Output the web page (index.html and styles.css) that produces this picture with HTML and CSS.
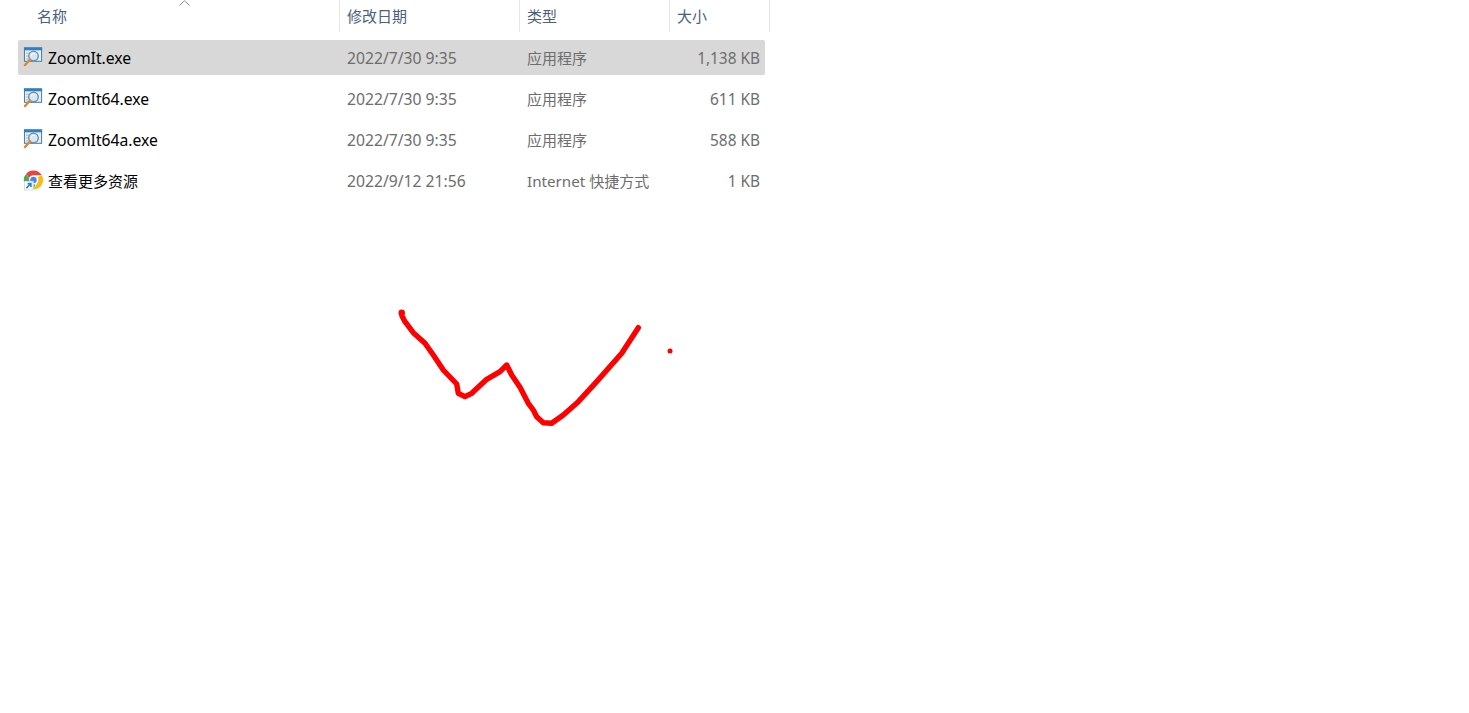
FILE: index.html
```html
<!DOCTYPE html>
<html lang="zh-CN">
<head>
  <meta charset="UTF-8" />
  <title>ZoomIt</title>
  <link rel="stylesheet" href="styles.css">
</head>
<body>
  <!-- icon sprites -->
  <svg class="sprites" width="0" height="0">
    <symbol id="zoomit" viewBox="1 0 22 22">
      <rect x="2.500" y="1.500" width="18" height="14" fill="#e6eff6" stroke="#3f76a8"/>
      <rect x="2" y="1" width="19" height="3" fill="#2f7fc4"/>
      <path d="M4 7h5M4 10h3M4 13h3" stroke="#a9b4bd"/>
      <circle cx="12" cy="10" r="5" fill="#d5e9f5" stroke="#76909f" stroke-width="1.500"/>
      <path d="M9.500 9.500a3 3 0 0 1 4-2" fill="none" stroke="#fff"/>
      <path d="M8.500 13.500L3 19.500" stroke="#d98a3d" stroke-width="2.400" stroke-linecap="round"/>
    </symbol>
    <symbol id="chrome" viewBox="0 0 22 22">
      <path d="M11 1a10 10 0 0 1 8.700 5H11a5 5 0 0 0-4.700 3.200L3.400 4.400A10 10 0 0 1 11 1z" fill="#e8453c"/>
      <path d="M19.700 6A10 10 0 0 1 11 21l4.200-7.400A5 5 0 0 0 15.300 8z" fill="#f9bc15"/>
      <path d="M3.400 4.400l4 7A5 5 0 0 0 13 15.700L11 21A10 10 0 0 1 3.400 4.400z" fill="#4aa856"/>
      <circle cx="11" cy="11" r="4" fill="#4285f4" stroke="#fff" stroke-width="1"/>
      <rect x="1" y="12" width="10" height="10" fill="#fff"/>
      <rect x="1.500" y="12.500" width="9" height="9" fill="#fff" stroke="#c4c4c4" stroke-width=".6"/>
      <path d="M3.500 19.500L8 15M4.800 14.800H8.300V18.300" fill="none" stroke="#2b7cd3" stroke-width="1.600"/>
    </symbol>
  </svg>

  <div class="explorer">
    <div class="list-header">
      <div class="col-head col-name">名称<svg class="sort-arrow" width="11" height="6" viewBox="0 0 11 6"><path d="M.5 5.500L5.500 .8l5 4.700" fill="none" stroke="#8a8a8a"/></svg></div>
      <div class="col-head col-date">修改日期</div>
      <div class="col-head col-type">类型</div>
      <div class="col-head col-size">大小</div>
    </div>

    <div class="file-list">
      <div class="file-row selected">
        <div class="file-name"><svg class="file-icon"><use href="#zoomit"/></svg>ZoomIt.exe</div>
        <div class="file-date">2022/7/30 9:35</div>
        <div class="file-type cjk">应用程序</div>
        <div class="file-size">1,138 KB</div>
      </div>
      <div class="file-row">
        <div class="file-name"><svg class="file-icon"><use href="#zoomit"/></svg>ZoomIt64.exe</div>
        <div class="file-date">2022/7/30 9:35</div>
        <div class="file-type cjk">应用程序</div>
        <div class="file-size">611 KB</div>
      </div>
      <div class="file-row">
        <div class="file-name"><svg class="file-icon"><use href="#zoomit"/></svg>ZoomIt64a.exe</div>
        <div class="file-date">2022/7/30 9:35</div>
        <div class="file-type cjk">应用程序</div>
        <div class="file-size">588 KB</div>
      </div>
      <div class="file-row">
        <div class="file-name cjk"><svg class="file-icon shortcut"><use href="#chrome"/></svg>查看更多资源</div>
        <div class="file-date">2022/9/12 21:56</div>
        <div class="file-type link-type">Internet <span class="cjk">快捷方式</span></div>
        <div class="file-size">1 KB</div>
      </div>
    </div>
  </div>

  <!-- pen annotation on top of the screen -->
  <svg class="ink" width="1469" height="713" viewBox="0 0 1469 713">
    <path d="M401.700 312.700L402 316L405 321.700L413.300 332.700L425 343.300L433.300 355L443.300 370L456.700 384L458.300 393.300L465 396.700L471.700 393.300L486.700 379.300L500 371.700L506.700 365L511.700 375L520 387.300L528.300 403.300L533.300 410L536.700 416.700L543.300 422.700L551.700 423.300L563.300 415L578.300 401.700L596.700 381.700L621.700 353.300L638.300 327.700" fill="none" stroke="#fe0000" stroke-width="5.400" stroke-linecap="round" stroke-linejoin="round"/>
    <circle cx="401.700" cy="312.700" r="3.200" fill="#fe0000"/>
    <circle cx="670" cy="351" r="2.500" fill="#fe0000"/>
  </svg>
</body>
</html>
```

FILE: styles.css
```css
html, body {
  margin: 0;
  padding: 0;
  height: 100%;
  overflow: hidden;
  background: #fff;
  font-family: "Noto Sans", "Noto Sans CJK SC", sans-serif;
  font-size: 15.7px;
}

.cjk {
  font-size: 15px;
}

.sprites {
  display: block;
}

.explorer {
  width: 770px;
}

.list-header {
  display: grid;
  grid-template-columns: 322px 180px 150px 100px;
  height: 32px;
  margin-left: 18px;
  margin-bottom: 8px;
  color: #4c607a;
}

.col-head {
  display: flex;
  align-items: center;
  padding-left: 7px;
  padding-bottom: 2px;
  border-right: 1px solid #e5e5e5;
  font-size: 15px;
}

.col-name {
  padding-left: 19px;
  position: relative;
}

.sort-arrow {
  position: absolute;
  left: 161px;
  top: 0;
}

.file-list {
  display: flex;
  flex-direction: column;
  gap: 6px;
  margin-left: 18px;
  width: 747px;
}

.file-row {
  display: grid;
  grid-template-columns: 322px 180px 150px 95px;
  align-items: center;
  height: 35px;
  border-radius: 2px;
  color: #6d6d6d;
}

.file-row.selected {
  background: #d8d8d8;
}

.file-name {
  display: flex;
  align-items: center;
  gap: 4px;
  padding-left: 5px;
  color: #000;
}

.file-icon {
  width: 21px;
  height: 22px;
  margin-top: -2px;
}

.file-icon.shortcut {
  margin-top: -1px;
}

.file-date, .file-type {
  padding-left: 7px;
}

.link-type {
  font-size: 15.2px;
}

.file-size {
  text-align: right;
  padding-top: 2px;
  padding-right: 5px;
  font-size: 15.4px;
}

.ink {
  position: absolute;
  left: 0;
  top: 0;
  pointer-events: none;
}
```
